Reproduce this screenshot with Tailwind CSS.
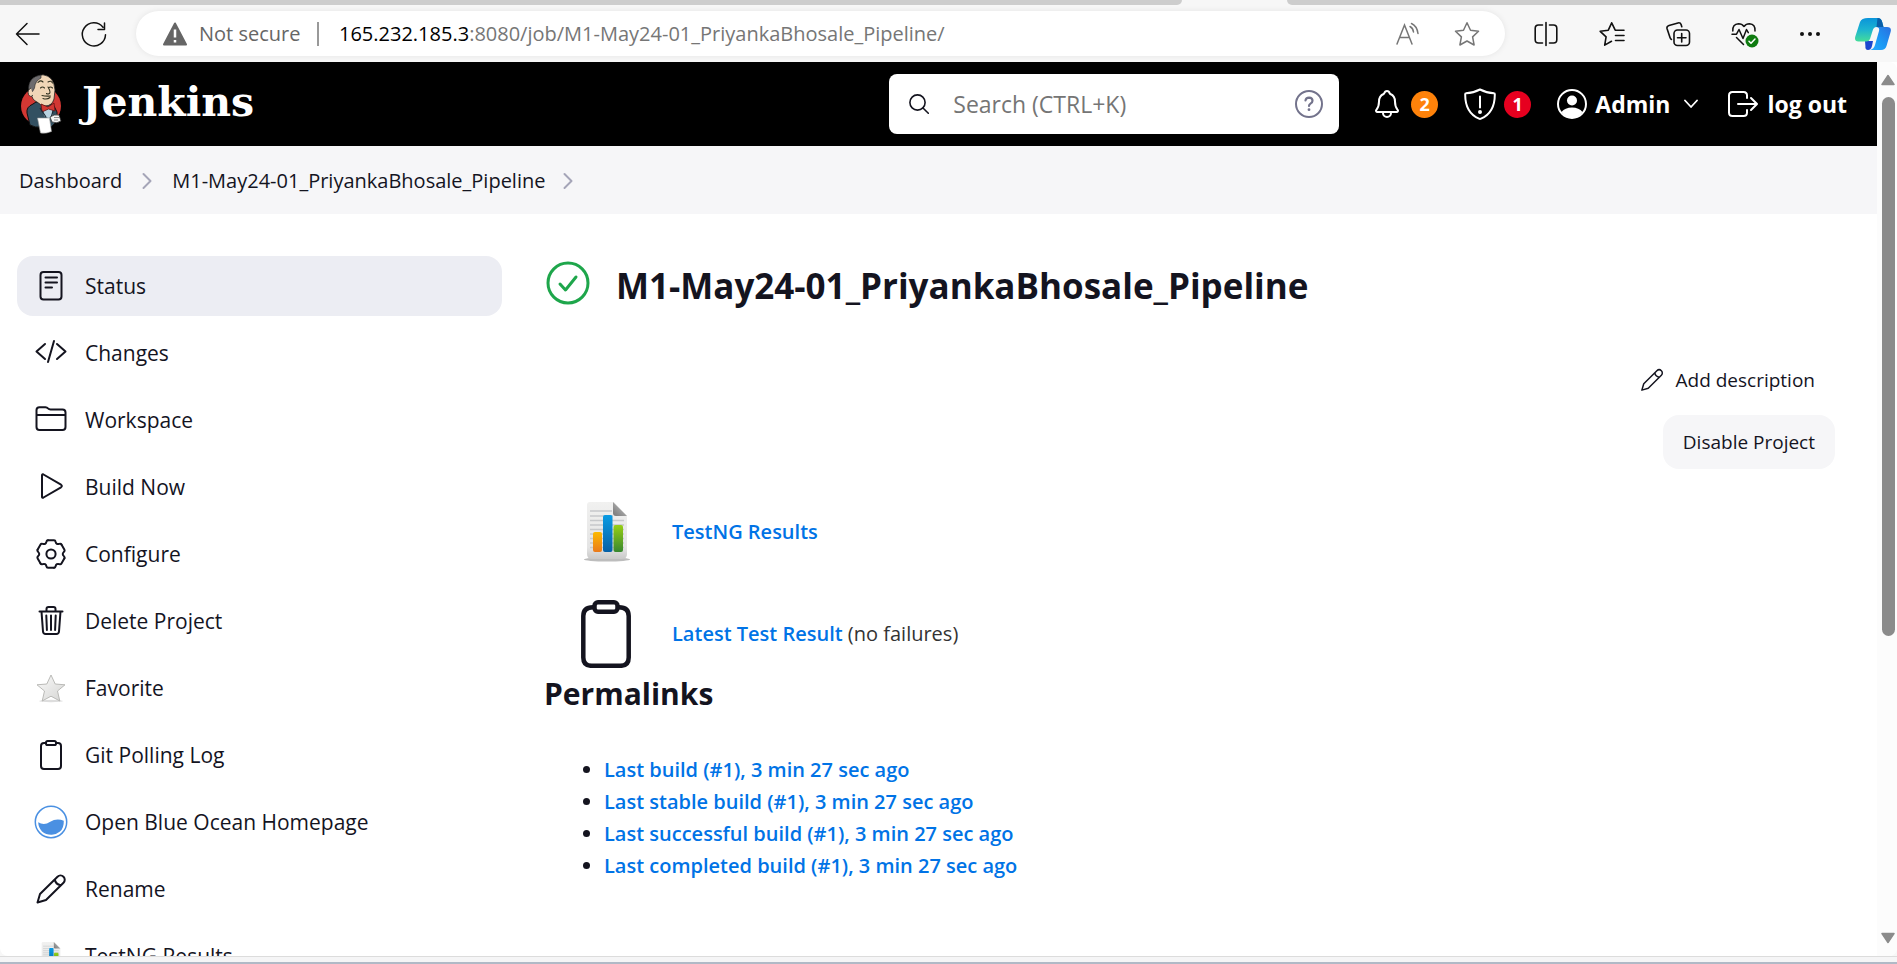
<!DOCTYPE html>
<html lang="en">
<head>
<meta charset="utf-8">
<title>M1-May24-01_PriyankaBhosale_Pipeline [Jenkins]</title>
<script src="https://cdn.jsdelivr.net/npm/@tailwindcss/browser@4"></script>
</head>
<body class="flex h-screen flex-col overflow-hidden bg-[#f7f7f7] font-['Open_Sans','Noto_Sans',sans-serif] text-[#14141f]">

<!-- shared symbols -->
<svg class="absolute size-0" aria-hidden="true">
  <defs>
    <linearGradient id="sheet" x1="0" y1="0" x2="0" y2="1"><stop offset="0" stop-color="#f1f1f0"/><stop offset=".8" stop-color="#e4e4e4"/><stop offset="1" stop-color="#c9c9c9"/></linearGradient>
    <linearGradient id="barO" x1="0" y1="0" x2="0" y2="1"><stop offset="0" stop-color="#fbb900"/><stop offset="1" stop-color="#ea7a1c"/></linearGradient>
    <linearGradient id="barB" x1="0" y1="0" x2="0" y2="1"><stop offset="0" stop-color="#0a9be3"/><stop offset="1" stop-color="#0560a6"/></linearGradient>
    <linearGradient id="barG" x1="0" y1="0" x2="0" y2="1"><stop offset="0" stop-color="#97cf14"/><stop offset="1" stop-color="#37872f"/></linearGradient>
    <linearGradient id="fold" x1="0" y1="1" x2="1" y2="0"><stop offset="0" stop-color="#777"/><stop offset="1" stop-color="#c8c8c8"/></linearGradient>
    <linearGradient id="starG" x1="0" y1="0" x2="1" y2="1"><stop offset="0" stop-color="#fafafa"/><stop offset="1" stop-color="#d5d5d3"/></linearGradient>
    <linearGradient id="cpA" x1="0" y1="0" x2="0" y2="1"><stop offset="0" stop-color="#0a94da"/><stop offset=".5" stop-color="#1db4d0"/><stop offset="1" stop-color="#45dd9a"/></linearGradient>
    <linearGradient id="cpB" x1="1" y1="0" x2="0" y2="1"><stop offset="0" stop-color="#2a6fe0"/><stop offset=".6" stop-color="#1a9bf5"/><stop offset="1" stop-color="#2aa8ff"/></linearGradient>
    <symbol id="i-report" viewBox="0 0 48 60">
      <ellipse cx="24" cy="57.500" rx="23" ry="2" fill="#bdbdbd"/>
      <path d="M7 0h24l13 14v38q0 5-5 5H9q-5 0-5-5V3q0-3 3-3z" fill="url(#sheet)"/>
      <path d="M7 9h22M7 14h23M7 18.500h34M7 23h34M7 27.500h34M7 32h34M7 36.500h34M7 41h34M7 45.500h34" stroke="#c6c8ca" stroke-width="1.300"/>
      <path d="M30 0l14 14H33q-3 0-3-3z" fill="url(#fold)"/>
      <rect x="10" y="30" width="9" height="20" rx="2" fill="url(#barO)"/>
      <rect x="20" y="13" width="9.500" height="37" rx="2" fill="url(#barB)"/>
      <rect x="30.500" y="23" width="9.500" height="27" rx="2" fill="url(#barG)"/>
    </symbol>
    <symbol id="i-clip" viewBox="0 0 512 512">
      <path fill="none" stroke="currentColor" stroke-width="32" stroke-linejoin="round" d="M336 64h32a48 48 0 0148 48v320a48 48 0 01-48 48H144a48 48 0 01-48-48V112a48 48 0 0148-48h32"/>
      <rect x="176" y="32" width="160" height="64" rx="26" fill="none" stroke="currentColor" stroke-width="32"/>
    </symbol>
    <symbol id="i-pencil" viewBox="0 0 32 32">
      <g fill="none" stroke="currentColor" stroke-width="2" stroke-linejoin="round" stroke-linecap="round"><path d="M2.500 29.500L5 21 22.500 3.700a4.200 4.200 0 016 6L11 27zM19.800 6.500c.5 3.200 2.600 5.200 5.900 5.800"/></g>
    </symbol>
    <symbol id="i-chev" viewBox="0 0 10 18"><path d="M1.500 2l7 7-7 7" fill="none" stroke="currentColor" stroke-width="2" stroke-linecap="round" stroke-linejoin="round"/></symbol>
    <path id="tooth" d="M-3-13.800H3Q4.300-13.800 4.600-12.200Q5.300-9.200 8.300-10.100Q9.800-10.600 10.450-9.500"/>
  </defs>
</svg>

<!-- tab strip edge -->
<div class="flex h-[5px] shrink-0" aria-hidden="true">
  <div class="w-[1182px] rounded-br-lg bg-[#cdcdcd]"></div>
  <div class="w-[105px]"></div>
  <div class="flex-1 rounded-bl-lg bg-[#cdcdcd]"></div>
</div>

<!-- browser toolbar -->
<div class="flex h-[57px] shrink-0 items-center pr-1.5 pl-[15px]">
  <button aria-label="Back" class="size-6"><svg viewBox="0 0 24 24" class="size-6 overflow-visible" fill="none" stroke="#111" stroke-width="1.500" stroke-linecap="round" stroke-linejoin="round"><path d="M24 12H1.500M12 1.500L1.500 12 12 22.500"/></svg></button>
  <button aria-label="Refresh" class="ml-[43px] size-6"><svg viewBox="0 0 24 24" class="size-6 overflow-visible" fill="none" stroke="#111" stroke-width="1.500" stroke-linecap="round" stroke-linejoin="round"><path d="M23.500 12.800A11.600 11.600 0 1121 5.200M22.500 1v6.500H16"/></svg></button>
  <div class="ml-[30px] flex h-[45px] min-w-0 flex-1 items-center rounded-full bg-white pr-[26px] pl-[27px] text-[20px] shadow-[0_0_6px_rgba(0,0,0,0.08)]">
    <svg viewBox="0 0 24 24" class="size-6 shrink-0"><path d="M12 1.500L23 22.500H1z" fill="#666" stroke="#666" stroke-width="2" stroke-linejoin="round"/><path d="M12 7.500v8M12 18v2.500" stroke="#fff" stroke-width="2.500"/></svg>
    <span class="ml-3 w-[120px] border-r-2 border-[#999] leading-6 whitespace-nowrap text-[#666]">Not secure</span>
    <input aria-label="Address" id="url" value="165.232.185.3:8080/job/M1-May24-01_PriyankaBhosale_Pipeline/" class="sr-only">
    <label for="url" class="ml-5 flex-1 whitespace-nowrap text-[#767676]"><span class="text-black">165.232.185.3</span>:8080/job/M1-May24-01_PriyankaBhosale_Pipeline/</label>
    <button aria-label="Read aloud"><svg viewBox="0 0 26 24" class="h-6 w-[26px]" fill="none" stroke="#767676" stroke-width="1.500" stroke-linecap="round"><path d="M2 22L9.500 3 17 22M4.800 15.500h9.500M15 4.500q3 1.500 3.500 5.500M16.500 1.500Q22 4 23 11.500"/></svg></button>
    <button aria-label="Add to favorites" class="ml-[34px]"><svg viewBox="0 0 24 24" class="size-6 overflow-visible" fill="none" stroke="#767676" stroke-width="1.500" stroke-linejoin="round"><path d="M12 .8l3.500 7.400 8 1.100-5.900 5.600 1.500 8.100L12 19l-7.100 4 1.500-8.100L.5 9.300l8-1.100z"/></svg></button>
  </div>
  <div class="ml-[29px] flex items-center gap-[42px]">
    <button aria-label="Split screen"><svg viewBox="0 0 24 24" class="size-6 overflow-visible" fill="none" stroke="#111" stroke-width="1.600" stroke-linecap="round"><path d="M12 .5v23M8.500 3H4.500Q1.200 3 1.200 6.300v11.400Q1.200 21 4.500 21h4M15.500 3h4q3.300 0 3.300 3.300v11.400q0 3.300-3.300 3.300h-4"/></svg></button>
    <button aria-label="Favorites"><svg viewBox="0 0 24 24" class="size-6 overflow-visible" fill="none" stroke="#111" stroke-width="1.600" stroke-linecap="round" stroke-linejoin="round"><path d="M16.500 8.200h-1.300L11.700.8 8.300 8.200.2 9.300l5.900 5.600-1.400 8.200 6.800-3.800M15.500 8.200h8.500M15.500 13.500h8.500M15.500 18.500h8.500"/></svg></button>
    <button aria-label="Collections"><svg viewBox="0 0 24 24" class="size-6 overflow-visible" fill="none" stroke="#111" stroke-width="1.600" stroke-linecap="round" stroke-linejoin="round"><rect x="8" y="8" width="15.500" height="15.500" rx="3.500"/><path d="M15.700 11.500v8.500M11.500 15.700H20M15.800 4.800l-.7-2.200Q14.300.3 12 .9L3 3.400Q.5 4.200 1 6.500l3 9q.5 1.500 1.500 2"/></svg></button>
    <button aria-label="Browser essentials"><svg viewBox="0 0 24 24" class="size-6 overflow-visible" fill="none" stroke="#111" stroke-width="1.500" stroke-linecap="round" stroke-linejoin="round"><path d="M.8 9Q.3 2 6.500 1.700 10 1.700 12 4.500 14 1.700 17.500 1.700 23.500 2 23 9M0 12.200h4.500L7 7.500l4 9 3.500-9 1.800 3.200M4.500 15.500l7 7"/><circle cx="20" cy="19" r="6.500" fill="#0f7b10" stroke="none"/><path d="M17 19.200l2 2 4-4.200" stroke="#fff"/></svg></button>
    <button aria-label="Settings and more"><svg viewBox="0 0 24 24" class="size-6" fill="#111"><circle cx="4" cy="12" r="2"/><circle cx="12" cy="12" r="2"/><circle cx="20" cy="12" r="2"/></svg></button>
  </div>
  <button aria-label="Copilot" class="ml-[33px]"><svg viewBox="0 0 36 32" class="h-8 w-9"><path d="M21 9h11q5 0 3.600 5L31.500 28q-1.200 4-5.500 4H15q4-1 5-5l4-14q1-4-3-4z" fill="url(#cpB)"/><path d="M10 23h8l-1 5q-1 4-4 4t-2.600-4z" fill="#1c46cf"/><path d="M13 0h10q3.200 0 4.200 4l1.300 5h-7q-3 0-4 4l-2.500 8q-.8 2.500-4 2.500H3.500q-4.500 0-3.200-5L5 4q1.500-4 8-4z" fill="url(#cpA)"/><path d="M22.500 0q3.700 0 4.700 4l1.300 5h-7z" fill="#0a5ea8"/></svg></button>
</div>

<div class="flex min-h-0 flex-1 overflow-hidden rounded-b-lg bg-white">
  <div class="flex min-w-0 flex-1 flex-col overflow-hidden">
    <!-- Jenkins header -->
    <header class="flex h-[84px] shrink-0 items-center bg-black pr-[30px] pl-5 text-white">
      <a href="#" class="flex items-center">
        <svg viewBox="0 0 42 60" class="h-[60px] w-[42px]" aria-hidden="true">
          <ellipse cx="21" cy="32" rx="20" ry="19.500" fill="#d33833"/>
          <path d="M13 30Q6 33 7 39l3 12q5 3 12 2h9l6-6V38l-3-6-8-4H16z" fill="#335061" stroke="#111" stroke-width="1"/>
          <path d="M14 7Q10 12 11 19q1 7 6 9 3 3 8 4 7 0 9-7l1-9Q34 2 23 .8 17 .8 14 7z" fill="#f0d6b7" stroke="#222" stroke-width=".8"/>
          <path d="M21 1Q9 2.500 8.500 14q0 3 2 5 2.500-1 4-5 .5-7 6.500-10z" fill="#6d6b6d" stroke="#222" stroke-width=".6"/>
          <path d="M11 14q-4 2-2.500 6.500Q10.500 24 13 21" fill="#f0d6b7" stroke="#222" stroke-width=".8"/>
          <path d="M18 8.500q2.500-3 5-.5M28 8q3-2 4.500 1M20.500 14q2-2 4 0M28.500 14q2-2 4 0M28 13q3 5 1.500 6.500-2 1-3 0M22 21.500q4 1 8.500.5M23 24.500q4 1.500 7-1" fill="none" stroke="#332" stroke-width="1.100" stroke-linecap="round"/>
          <path d="M23 35l1 7 6 3 3-5-1-5z" fill="#b8d2e0"/>
          <path d="M21 30l7 3 6-4 1 8-6.500-2L22 38z" fill="#d33833" stroke="#611" stroke-width=".8"/>
          <path d="M20 34l6 9M33 37l-2 7" stroke="#1b2b36" stroke-width="1.200"/>
          <path d="M17.500 44h12l2 13.500q-5 2.500-11 1.500z" fill="#fff" stroke="#999" stroke-width=".6"/>
          <path d="M30 43q4-3 9-2l2 6q-4 3-9 1z" fill="#f4f4f4" stroke="#333" stroke-width=".8"/><path d="M34 43.500h5M34 46h4" stroke="#666" stroke-width=".7"/>
        </svg>
        <span class="ml-5 pb-1 font-['DejaVu_Serif',serif] text-[41px] leading-[56px] font-bold">Jenkins</span>
      </a>
      <div class="ml-auto flex h-[60px] w-[450px] items-center rounded-lg bg-white pr-4 pl-5">
        <svg viewBox="0 0 20 20" class="size-5 shrink-0" fill="none" stroke="#14141f" stroke-width="1.600" stroke-linecap="round"><circle cx="8.500" cy="8.500" r="7.600"/><path d="M14 14l5.300 5.300"/></svg>
        <input type="search" aria-label="Search" placeholder="Search (CTRL+K)" class="ml-6 min-w-0 flex-1 text-[23px] leading-8 text-black outline-none placeholder:text-[#757575]">
        <a href="#" aria-label="Search help"><svg viewBox="0 0 28 28" class="size-7" fill="none" stroke="#73738c" stroke-width="2" stroke-linecap="round"><circle cx="14" cy="14" r="13"/><path d="M10.500 10.500q.3-2.800 3.600-2.800 3.400.2 3.400 3 0 1.800-2 2.900-1.500.9-1.500 2.400" stroke-width="2.200"/><circle cx="14" cy="19.700" r="1.400" fill="#73738c" stroke="none"/></svg></a>
      </div>
      <a href="#" aria-label="2 notifications" class="ml-8 flex items-center gap-2">
        <svg viewBox="0 0 512 512" class="size-8" fill="none" stroke="#fff" stroke-width="32" stroke-linecap="round" stroke-linejoin="round"><path d="M427.680 351.430C402 320 383.870 304 383.870 217.350 383.870 138 343.350 109.730 310 96c-4.430-1.820-8.600-6-9.950-10.550C294.200 65.540 277.800 48 256 48s-38.210 17.550-44 37.470c-1.350 4.600-5.520 8.710-9.950 10.530-33.390 13.750-73.870 41.920-73.870 121.350C128.130 304 110 320 84.320 351.430 73.680 364.450 83 384 101.610 384h308.880c18.510 0 27.770-19.610 17.190-32.570zM320 384v16a64 64 0 01-128 0v-16"/></svg>
        <span class="flex size-[27px] items-center justify-center rounded-full bg-[#fe820a] text-[18px] leading-none font-bold">2</span>
      </a>
      <a href="#" aria-label="1 security warning" class="ml-[26px] flex items-center gap-2">
        <svg viewBox="0 0 32 32" class="size-8" fill="none" stroke="#fff" stroke-width="2" stroke-linecap="round" stroke-linejoin="round"><path d="M16 1.500Q9.500 5 2 5.200q-.8 0-.8 1Q1 24.500 15 30.700q1 .5 2 0Q31 24.500 30.800 6.200q0-1-.8-1Q22.500 5 16 1.500zM16 8.500v11"/><circle cx="16" cy="24" r="1" fill="#fff"/></svg>
        <span class="flex size-[27px] items-center justify-center rounded-full bg-[#e6001f] text-[18px] leading-none font-bold">1</span>
      </a>
      <button class="ml-[26px] flex items-center text-[23px] leading-8 font-bold">
        <svg viewBox="0 0 30 30" class="size-[30px]" aria-hidden="true"><circle cx="15" cy="15" r="14" fill="none" stroke="#fff" stroke-width="2"/><circle cx="15" cy="11.500" r="5" fill="#fff"/><path d="M4.500 23Q8 18.500 15 18.500T25.500 23Q21.500 29 15 29T4.500 23z" fill="#fff"/></svg>
        <span class="ml-2">Admin</span>
        <svg viewBox="0 0 14 10" class="ml-3.5 h-2.5 w-3.5" fill="none" stroke="#fff" stroke-width="1.800" stroke-linecap="round" stroke-linejoin="round"><path d="M1 1.500l6 6.500 6-6.500"/></svg>
      </button>
      <a href="#" class="ml-[29px] flex items-center gap-2 text-[23px] leading-8 font-bold">
        <svg viewBox="0 0 32 32" class="size-8" fill="none" stroke="#fff" stroke-width="2" stroke-linecap="round" stroke-linejoin="round" aria-hidden="true"><path d="M20 10V7.500Q20 4 16.500 4H5.500Q2 4 2 7.500v17Q2 28 5.500 28h11q3.500 0 3.500-3.500V22M11 16h18.500M24 10l6 6-6 6"/></svg>
        log out</a>
    </header>

    <nav aria-label="Breadcrumb" class="flex h-[68px] shrink-0 items-center bg-[#f6f6f8] px-[19px] pt-0.5 text-[20px] leading-7">
      <a href="#">Dashboard</a>
      <svg class="mx-5 h-[18px] w-2.5 text-[#a5a5b8]"><use href="#i-chev"/></svg>
      <a href="#">M1-May24-01_PriyankaBhosale_Pipeline</a>
      <svg class="mx-[18px] h-[18px] w-2.5 text-[#a5a5b8]"><use href="#i-chev"/></svg>
    </nav>

    <div class="flex min-h-0 flex-1 pt-[42px] pr-[42px] pl-[17px]">
      <!-- side panel -->
      <nav aria-label="Project" class="flex w-[485px] shrink-0 flex-col gap-[7px] text-[21px] leading-8">
        <a href="#" aria-current="page" class="flex h-[60px] shrink-0 items-center gap-[18px] rounded-2xl bg-[#ecedf3] px-[18px]">
          <svg viewBox="0 0 32 32" class="size-8" fill="none" stroke="currentColor" stroke-width="2" stroke-linecap="round"><rect x="5.500" y="2" width="21" height="27.500" rx="3"/><path d="M10.500 7.500H22M10.500 12.500H22M10.500 17.500H17"/></svg>Status</a>
        <a href="#" class="flex h-[60px] shrink-0 items-center gap-[18px] px-[18px]">
          <svg viewBox="0 0 32 32" class="size-8" fill="none" stroke="currentColor" stroke-width="2" stroke-linecap="round" stroke-linejoin="round"><path d="M10 7L1.500 14.500 10 22M22 7l8.500 7.500L22 22M19 4l-6 21"/></svg>Changes</a>
        <a href="#" class="flex h-[60px] shrink-0 items-center gap-[18px] px-[18px]">
          <svg viewBox="0 0 32 32" class="size-8" fill="none" stroke="currentColor" stroke-width="2" stroke-linecap="round" stroke-linejoin="round"><path d="M1.500 11V6Q1.500 3.200 4.500 3.200h6q1.500 0 2.500 1.200 1 1.100 2.500 1.100h12q3 0 3 3v14.500q0 3-3 3h-23q-3 0-3-3V11h29"/></svg>Workspace</a>
        <a href="#" class="flex h-[60px] shrink-0 items-center gap-[18px] px-[18px]">
          <svg viewBox="0 0 32 32" class="size-8" fill="none" stroke="currentColor" stroke-width="2" stroke-linejoin="round"><path d="M7 4.300v21.400q0 1.600 1.500.8l17.500-10.200q1.700-1.300 0-2.600L8.500 3.500Q7 2.700 7 4.300z"/></svg>Build Now</a>
        <a href="#" class="flex h-[60px] shrink-0 items-center gap-[18px] px-[18px]">
          <svg viewBox="-16 -16 32 32" class="size-8" fill="none" stroke="currentColor" stroke-width="2" stroke-linecap="round" stroke-linejoin="round"><use href="#tooth"/><use href="#tooth" transform="rotate(60)"/><use href="#tooth" transform="rotate(120)"/><use href="#tooth" transform="rotate(180)"/><use href="#tooth" transform="rotate(240)"/><use href="#tooth" transform="rotate(300)"/><circle r="4.600"/></svg>Configure</a>
        <a href="#" class="flex h-[60px] shrink-0 items-center gap-[18px] px-[18px]">
          <svg viewBox="0 0 32 32" class="size-8" fill="none" stroke="currentColor" stroke-width="2" stroke-linecap="round" stroke-linejoin="round"><path d="M6.500 6.500l1.500 20q.2 2.500 2.700 2.500h10.600q2.500 0 2.700-2.500l1.500-20M4.500 6.500h23M11.500 6V4q0-2 2-2h5q2 0 2 2v2M16 10.500v14.500M11.300 10.500l.6 14.500M20.700 10.500L20.100 25"/></svg>Delete Project</a>
        <a href="#" class="flex h-[60px] shrink-0 items-center gap-[18px] px-[18px]">
          <svg viewBox="0 0 32 32" class="size-8"><ellipse cx="16" cy="29" rx="12" ry="1.200" fill="#ddd"/><path d="M16 3l4.200 9 9.800.8-7.500 6.200 2.300 10L16 24.200 7.200 29l2.300-10L2 12.800l9.800-.8z" fill="url(#starG)" stroke="#b3b3b0" stroke-width=".9" stroke-linejoin="round"/></svg>Favorite</a>
        <a href="#" class="flex h-[60px] shrink-0 items-center gap-[18px] px-[18px]">
          <svg class="size-8"><use href="#i-clip"/></svg>Git Polling Log</a>
        <a href="#" class="flex h-[60px] shrink-0 items-center gap-[18px] px-[18px]">
          <svg viewBox="0 0 32 32" class="size-8 overflow-visible"><circle cx="16" cy="16" r="15.700" fill="#fff" stroke="#4a90e2" stroke-width="1.500"/><path d="M3.200 16.300q6 3.600 12-.6 6.500-3.700 13.600-.9Q29 22 25 25.600 21 29 16 28.700q-5 0-9-3.300-3.600-3.600-3.800-9.100z" fill="#4a90e2"/></svg>Open Blue Ocean Homepage</a>
        <a href="#" class="flex h-[60px] shrink-0 items-center gap-[18px] px-[18px]">
          <svg class="size-8"><use href="#i-pencil"/></svg>Rename</a>
        <a href="#" class="flex h-[60px] shrink-0 items-center gap-[18px] px-[18px]">
          <svg class="size-8"><use href="#i-report" width="32" height="28" y="2"/></svg>TestNG Results</a>
      </nav>

      <!-- main panel -->
      <main class="ml-[42px] flex min-w-0 flex-1 flex-col text-[20px]">
        <div class="flex h-[60px] items-center">
          <svg viewBox="0 0 48 48" class="-mt-1.5 size-12" fill="none" stroke="#1ea64b" stroke-linecap="round" stroke-linejoin="round" role="img" aria-label="Success"><circle cx="24" cy="24" r="20" stroke-width="3"/><path d="M16 25l5.500 6L32 18" stroke-width="3"/></svg>
          <h1 class="ml-6 text-[35px] leading-[48px] font-bold">M1-May24-01_PriyankaBhosale_Pipeline</h1>
        </div>
        <div class="mt-10 flex flex-col items-end text-[19px]">
          <a href="#" class="flex h-12 items-center gap-3 pr-5 leading-7"><svg class="size-6"><use href="#i-pencil"/></svg>Add description</a>
          <button class="mt-[11px] h-[54px] rounded-2xl bg-[#f6f6f8] px-5 leading-7">Disable Project</button>
        </div>
        <table class="mt-[13px] ml-[37px] self-start text-left">
          <tr class="h-[100px]"><td class="w-[91px]"><svg class="h-[60px] w-[52px]"><use href="#i-report"/></svg></td><td><a href="#" class="font-semibold text-[#0073e6]">TestNG Results</a></td></tr>
          <tr class="h-[104px]"><td><svg viewBox="0 0 50 68" class="h-[68px] w-[50px]" fill="none" stroke="#14141f" stroke-width="4.500" aria-hidden="true"><path d="M12 7.200Q2.300 7.200 2.300 16v41.500q0 8.300 8.300 8.300h28.800q8.300 0 8.300-8.300V16q0-8.800-9.700-8.800"/><rect x="13.500" y="2.300" width="23" height="9.500" rx="3.500"/></svg></td><td><a href="#" class="font-semibold text-[#0073e6]">Latest Test Result</a> <span class="text-[#333]">(no failures)</span></td></tr>
        </table>
        <h2 class="-mt-3 text-[30px] leading-10 font-bold">Permalinks</h2>
        <ul class="mt-10 list-disc pl-[60px] leading-8 font-semibold">
          <li><a href="#" class="text-[#0073e6]">Last build (#1), 3 min 27 sec ago</a></li>
          <li><a href="#" class="text-[#0073e6]">Last stable build (#1), 3 min 27 sec ago</a></li>
          <li><a href="#" class="text-[#0073e6]">Last successful build (#1), 3 min 27 sec ago</a></li>
          <li><a href="#" class="text-[#0073e6]">Last completed build (#1), 3 min 27 sec ago</a></li>
        </ul>
      </main>
    </div>
  </div>

  <!-- scrollbar -->
  <div class="flex w-5 shrink-0 flex-col items-center rounded-tr-lg bg-[#fcfcfc] pt-3 pb-3 pl-0.5" aria-hidden="true">
    <svg viewBox="0 0 14 12" class="h-3 w-3.5"><path d="M7 1.500L13 10.500H1z" fill="#8b8b8b" stroke="#8b8b8b" stroke-width="1.500" stroke-linejoin="round"/></svg>
    <div class="mt-[11px] h-[62%] w-[13px] rounded-full bg-[#8b8b8b]"></div>
    <svg viewBox="0 0 14 12" class="mt-auto h-3 w-3.5"><path d="M7 10.500L13 1.500H1z" fill="#8b8b8b" stroke="#8b8b8b" stroke-width="1.500" stroke-linejoin="round"/></svg>
  </div>
</div>
<div class="h-2 shrink-0 border-t border-b-2 border-t-[#dcdcdc] border-b-[#b0b9c6] bg-[#f5f5f6]" aria-hidden="true"></div>
</body>
</html>
